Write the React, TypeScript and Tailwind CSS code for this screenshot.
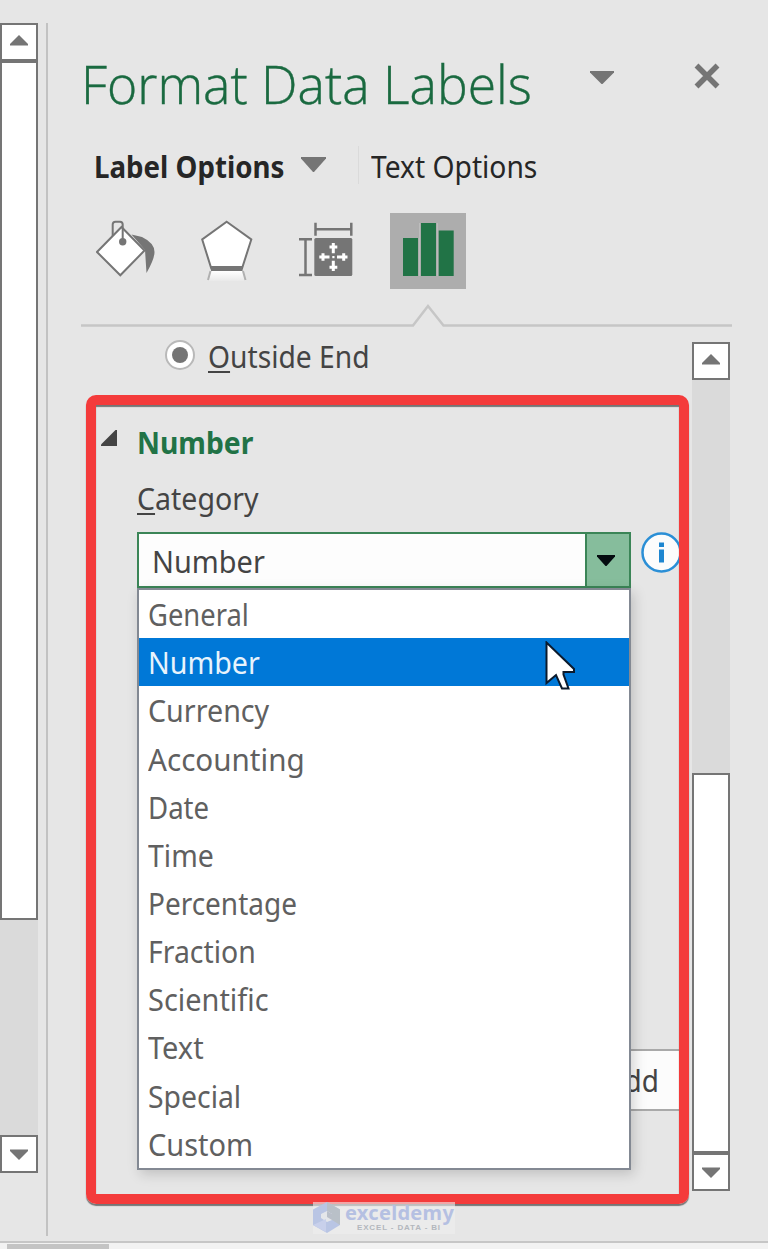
import { clsx } from 'clsx';

const categories = [
  { name: 'General', fit: 'scale-x-[0.882]' },
  { name: 'Number', fit: 'scale-x-[0.923]' },
  { name: 'Currency', fit: 'scale-x-[0.925]' },
  { name: 'Accounting', fit: 'scale-x-[0.955]' },
  { name: 'Date', fit: 'scale-x-[0.89]' },
  { name: 'Time', fit: 'scale-x-[0.918]' },
  { name: 'Percentage', fit: 'scale-x-[0.902]' },
  { name: 'Fraction', fit: 'scale-x-[0.916]' },
  { name: 'Scientific', fit: 'scale-x-[0.933]' },
  { name: 'Text', fit: 'scale-x-[0.935]' },
  { name: 'Special', fit: 'scale-x-[0.915]' },
  { name: 'Custom', fit: 'scale-x-[0.935]' },
];

function Arrow({ up = false }: { up?: boolean }) {
  return (
    <svg width="18" height="11" viewBox="0 0 18 11" className="fill-[#757575]" aria-hidden>
      <path d={up ? 'M9 0 18 9V10.5H0V9Z' : 'M0 .5H18V2L9 11 0 2Z'} />
    </svg>
  );
}

function ScrollButton({ up = false }: { up?: boolean }) {
  return (
    <div
      className={clsx(
        'flex h-[38px] shrink-0 justify-center border-2 border-[#757575] bg-white',
        up ? 'pt-[10px]' : 'pt-[12px]',
      )}
    >
      <Arrow up={up} />
    </div>
  );
}

function FillIcon() {
  return (
    <svg width="60" height="60" viewBox="96 219 60 60" fill="none" aria-hidden>
      <path d="M131.500 234.500 142 237Q154.500 243 154.500 252 154.500 259 146.500 273L145 250Z" fill="#757575" />
      <path d="M121.500 227 144.500 250.500 120.300 275.300 97 252Z" fill="#fff" stroke="#757575" strokeWidth="2" />
      <path
        d="M112.700 236V224.500Q112.700 221.700 115.500 221.700H120Q122.700 221.700 122.700 224.500V240"
        stroke="#757575"
        strokeWidth="2"
      />
      <circle cx="122.700" cy="241.700" r="3.700" fill="#757575" />
    </svg>
  );
}

function EffectsIcon() {
  return (
    <svg width="54" height="64" viewBox="200 219 54 64" fill="none" aria-hidden>
      <defs>
        <linearGradient id="reflection" x1="0" y1="0" x2="0" y2="1">
          <stop offset="0" stopColor="#fff" />
          <stop offset="1" stopColor="#e9e9e9" />
        </linearGradient>
      </defs>
      <path d="M211 271H242.500L245 281H208.500Z" fill="url(#reflection)" />
      <path d="M210.500 271 208 280M243 271 245.500 280" stroke="#b0b0b0" strokeWidth="2" />
      <path
        d="M226.700 221.700 251.300 239.500 242 268.500H211.300L202.200 239.500Z"
        fill="#fff"
        stroke="#757575"
        strokeWidth="2"
      />
      <path d="M211 266H242.500V271H211Z" fill="#757575" />
    </svg>
  );
}

function SizeIcon() {
  return (
    <svg width="54" height="56" viewBox="299 222 54 56" fill="none" aria-hidden>
      <path
        d="M315.500 222.700V235.700M351.300 222.700V235.700M315.500 229.300H351.300M299 239.300H312M299 275H312M305.500 239.300V275"
        stroke="#757575"
        strokeWidth="2.500"
      />
      <rect x="314.300" y="238" width="38" height="38" rx="1.500" fill="#757575" />
      <path
        d="M333.300 243V253.300M333.300 260.700V271M319.300 257H329.500M337 257H347.500M329.500 247H337.300M329.500 267.300H337.300M323 253.300V260.700M343.700 253.300V260.700"
        stroke="#fff"
        strokeWidth="3"
      />
      <path d="M332.300 256H334.500V258.200H332.300Z" fill="#fff" />
    </svg>
  );
}

function ChartIcon() {
  return (
    <svg width="76" height="76" viewBox="390 213 76 76" className="fill-[#217346]" aria-hidden>
      <path d="M403 238H418V276H403ZM421 223H436V276H421ZM438.700 230.500H453.700V276H438.700Z" />
      <path d="M419.500 223V276M437.400 223V276" stroke="#bdbdbd" />
    </svg>
  );
}

function PaneHeader() {
  return (
    <header className="flex h-[328px] flex-col">
      <div className="flex h-[136px] items-start">
        <h1 className="ml-[33px] mt-[56px] h-[56px] w-[509px] origin-left scale-x-[0.975] whitespace-nowrap font-['Open_Sans','Noto_Sans',sans-serif] text-[53px] font-light leading-[56px] text-[#1a6a40] [-webkit-text-stroke:0.4px_#1a6a40]">
          Format Data Labels
        </h1>
        <svg width="24" height="13" viewBox="0 0 24 13" className="mt-[71px] fill-[#757575]" aria-hidden>
          <path d="M0 0H24V1.500L12.500 13H11.500L0 1.500Z" />
        </svg>
        <svg width="26" height="26" viewBox="0 0 26 26" className="ml-[80px] mt-[63px]" aria-hidden>
          <path d="M2.500 2.500 23.500 23.500M23.500 2.500 2.500 23.500" stroke="#757575" strokeWidth="5.500" />
        </svg>
      </div>
      <div className="flex h-[64px] items-start pl-[46px] pt-[10px] text-[31px] leading-[40px] text-[#262626]">
        <span className="w-[207px] origin-left scale-x-[0.893] whitespace-nowrap font-bold">Label Options</span>
        <svg width="25" height="15" viewBox="0 0 25 15" className="mt-[11px] fill-[#757575]" aria-hidden>
          <path d="M0 0H25V1.500L13 15H12L0 1.500Z" />
        </svg>
        <div className="ml-[32px] h-[38px] w-px bg-[#dadada]" />
        <span className="ml-[12px] origin-left scale-x-[0.91] whitespace-nowrap">Text Options</span>
      </div>
      <div className="flex h-[102px] items-start pl-[48px]">
        <div className="mt-[19px]"><FillIcon /></div>
        <div className="ml-[44px] mt-[19px]"><EffectsIcon /></div>
        <div className="ml-[45px] mt-[22px]"><SizeIcon /></div>
        <div className="ml-[37px] mt-[13px] bg-[#adadad]"><ChartIcon /></div>
      </div>
      <svg width="651" height="26" viewBox="81 302 651 26" fill="none" className="ml-[33px] shrink-0" aria-hidden>
        <path d="M81 325.500H413L428 306 443.500 325.500H732" stroke="#c6c6c6" strokeWidth="2.500" />
      </svg>
    </header>
  );
}

function InfoIcon() {
  return (
    <svg width="42" height="42" viewBox="0 0 42 42" aria-hidden>
      <circle cx="21.500" cy="20.500" r="19" fill="#fcfcfc" stroke="#2b8fd6" strokeWidth="2.500" />
      <path d="M19 10.500H24V15H19ZM19 17.500H24V30.500H19Z" fill="#1e86d0" />
    </svg>
  );
}

function CategoryList() {
  return (
    <ul className="absolute left-0 top-[56px] h-[582px] w-[494px] border-2 border-[#838993] bg-white text-[31px] text-[#606060] shadow-[3px_4px_12px_rgba(0,0,0,0.17)]">
      {categories.map(({ name, fit }) => (
        <li
          key={name}
          className={clsx(
            'flex h-[48.170px] items-center pl-[9px] pt-px',
            name === 'Number' && 'bg-[#0078d7] text-[#e8f3fc]',
          )}
        >
          <span className={clsx('origin-left whitespace-nowrap leading-none', fit)}>{name}</span>
        </li>
      ))}
    </ul>
  );
}

function NumberSection() {
  return (
    <section className="flex flex-1 flex-col pl-[53px] pt-[18px]">
      <div className="flex h-[60px] items-start">
        <svg width="16" height="16" viewBox="0 0 16 16" className="mt-[22px] fill-[#444]" aria-hidden>
          <path d="M16 0V16H0V14.500L14.500 0Z" />
        </svg>
        <h2 className="ml-[20px] mt-[14px] origin-left scale-x-[0.912] whitespace-nowrap text-[31px] font-bold leading-[40px] text-[#217346]">
          Number
        </h2>
      </div>
      <div className="flex h-[64px] items-start pl-[36px] pt-[10px] text-[31px] leading-[40px] text-[#444]">
        <span className="origin-left scale-x-[0.92] whitespace-nowrap">
          <span className="underline decoration-2 underline-offset-[3px]">C</span>ategory
        </span>
      </div>
      <div className="relative z-10 ml-[36px] flex w-[545px] items-start">
        <div className="flex h-[56px] w-[494px] shrink-0 border-2 border-[#3b8557] bg-[#fdfdfd]">
          <div className="flex flex-1 items-center pl-[13px] pt-[3px] text-[31px] leading-none text-[#444]">
            <span className="origin-left scale-x-[0.932]">Number</span>
          </div>
          <div className="flex w-[44px] border-l-2 border-[#3b8557] bg-[#86bd9c] pl-[10px] pt-[21px]">
            <svg width="18" height="11" viewBox="0 0 18 11" aria-hidden>
              <path d="M0 0H18V1.500L9.500 11H8.500L0 1.500Z" fill="#050c10" />
            </svg>
          </div>
        </div>
        <div className="ml-[9px]"><InfoIcon /></div>
        <CategoryList />
      </div>
      <div className="mt-[461px] ml-[450px] flex h-[62px] w-[135px] items-center justify-end border-2 border-[#a9a9a9] bg-[#fcfcfc] pr-[25px] text-[31px] text-[#444]">
        <span className="origin-right scale-x-[0.9]">Add</span>
      </div>
    </section>
  );
}

function FormatPane() {
  return (
    <main className="flex h-[1241px] w-[720px] flex-col">
      <PaneHeader />
      <div className="flex flex-1">
        <div className="flex w-[644px] flex-col">
          <div className="flex h-[62px] items-start pl-[117px] pt-[12px]">
            <div className="flex h-[30px] w-[30px] items-center justify-center rounded-full border-2 border-[#b9b9b9] bg-white">
              <div className="h-[16px] w-[16px] rounded-full bg-[#757575]" />
            </div>
            <span className="ml-[13px] mt-[-4px] origin-left scale-x-[0.91] whitespace-nowrap text-[31px] leading-[40px] text-[#444]">
              <span className="underline decoration-2 underline-offset-[3px]">O</span>utside End
            </span>
          </div>
          <NumberSection />
        </div>
        <div className="mt-[14px] flex h-[849px] w-[38px] flex-col">
          <ScrollButton up />
          <div className="h-[393px] bg-[#dadada]" />
          <div className="flex-1 border-2 border-[#757575] bg-white" />
          <ScrollButton />
        </div>
      </div>
    </main>
  );
}

function Watermark() {
  return (
    <div className="absolute left-[313px] top-[1202px] z-30 flex h-[32px] w-[142px] bg-[#eee]/60 text-[#b5c0e2]">
      <svg width="28" height="32" viewBox="0 0 28 32" aria-hidden>
        <path d="M14 0 27 7.500V23L14 31 0 23V7.500Z" fill="#b9c5e4" />
        <path d="M14 0 27 7.500V23L19 18V12L14 9Z" fill="#b9c0c8" />
        <path d="M14 9 19 12V18L14 20 8 16V12Z" fill="#e4e6ea" />
        <path d="M14 9 19 12V18L14 15Z" fill="#b9bfc9" />
        <path d="M0 23 13 17V30Z" fill="#c8d0eb" />
      </svg>
      <div className="flex flex-col pl-[4px] pt-px">
        <span className="h-[21px] whitespace-nowrap text-[20px] font-bold leading-[20px] tracking-[0.300px]">
          exceldemy
        </span>
        <span className="h-[8px] whitespace-nowrap pl-[12px] font-['Liberation_Sans',sans-serif] text-[8px] font-bold leading-[8px] tracking-[0.850px] text-[#b3b7bd]">
          EXCEL - DATA - BI
        </span>
      </div>
    </div>
  );
}

export default function App() {
  return (
    <div className="relative flex h-[1249px] w-[768px] flex-col overflow-hidden bg-[#e6e6e6] font-['Noto_Sans','Open_Sans',sans-serif]">
      <div className="flex h-[1241px]">
        <div className="mt-[23px] flex h-[1150px] w-[38px] shrink-0 flex-col">
          <ScrollButton up />
          <div className="h-[859px] shrink-0 border-2 border-[#757575] bg-white" />
          <div className="flex-1 bg-[#dadada]" />
          <ScrollButton />
        </div>
        <div className="ml-[8px] mt-[23px] h-[1213px] w-[2px] shrink-0 bg-[#c2c2c2]" />
        <FormatPane />
      </div>
      <div className="h-[8px] border-t-2 border-[#c6c6c6] bg-[#f2f2f2] pl-[7px] pt-px">
        <div className="h-[5px] w-[102px] bg-[#c4c4c4]" />
      </div>

      {/* highlight frame */}
      <div className="pointer-events-none absolute left-[86px] top-[395px] z-20 h-[809px] w-[603px] rounded-[10px] border-[10px] border-[#f43b3b] shadow-[0_2px_1px_#757575,inset_0_2px_1px_#757575]" />

      <svg width="34" height="50" viewBox="0 0 34 50" className="absolute left-[545px] top-[641px] z-30" aria-hidden>
        <path
          d="M1.500 1.500V42L11 34 17 47.500H23.500L18.500 33.500V31H29V28Z"
          fill="#fff"
          stroke="#0b1a2c"
          strokeWidth="2"
        />
      </svg>
      <Watermark />
    </div>
  );
}
